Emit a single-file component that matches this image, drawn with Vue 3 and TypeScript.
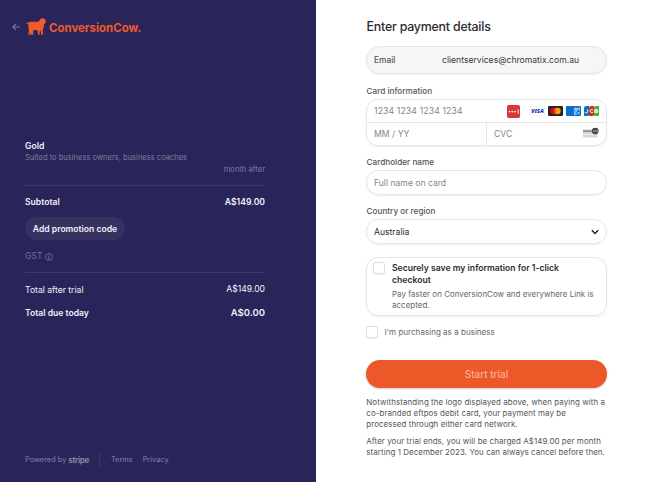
<script setup lang="ts">
interface FooterLink {
  label: string
}

const links: FooterLink[] = [{ label: 'Terms' }, { label: 'Privacy' }]
</script>

<template>
  <div class="checkout">
    <aside class="summary">
      <header class="brand">
        <svg class="back" viewBox="0 0 8 8" fill="none" stroke="#77749a" stroke-width="1.1">
          <path d="M8 4H1M4 .8.8 4 4 7.2" />
        </svg>
        <svg class="cow" viewBox="0 0 66 54" fill="#f15a29">
          <path d="M1 14 7 15 11 13 17 11H39L43 8 46 3 52 1 59 2 60 6 63 9 62 14 57 18V25L55 32 53 36 54 50H49L47 38 44 40V50H39L38 37 27 36 24 39 25 50H18V42L16 50H10L12 37 10 31V17L6 17Z" />
        </svg>
        <span class="brand-name">ConversionCow.</span>
      </header>

      <section class="order">
        <div class="product">Gold</div>
        <div class="description">Suited to business owners, business coaches</div>
        <div class="interval">month after</div>
        <div class="row subtotal"><span>Subtotal</span><span class="amount">A$149.00</span></div>
        <button class="promo" type="button">Add promotion code</button>
        <div class="gst">
          <span>GST</span>
          <svg viewBox="0 0 9 9" fill="none" stroke="currentColor" stroke-width=".9">
            <circle cx="4.5" cy="4.5" r="3.9" />
            <path d="M3.6 4h1v2.7M3.3 6.6h2.4M4.5 2.1v1" />
          </svg>
        </div>
        <div class="row after"><span>Total after trial</span><span class="amount">A$149.00</span></div>
        <div class="row due"><span>Total due today</span><span class="amount">A$0.00</span></div>
      </section>

      <footer class="legal">
        <span class="powered">Powered by</span>
        <span class="stripe">stripe</span>
        <nav><span v-for="link in links" :key="link.label">{{ link.label }}</span></nav>
      </footer>
    </aside>

    <main class="payment">
      <h1>Enter payment details</h1>
      <div class="email"><span class="email-label">Email</span><span class="email-value">clientservices@chromatix.com.au</span></div>

      <div class="label card-label">Card information</div>
      <div class="card">
        <div class="card-number">
          <span class="placeholder number">1234 1234 1234 1234</span>
          <svg class="autofill" viewBox="0 0 13 13">
            <rect width="13" height="13" rx="1.8" fill="#d63a36" />
            <g fill="#fff"><circle cx="2.5" cy="6.6" r=".85" /><circle cx="5.2" cy="6.6" r=".85" /><circle cx="7.9" cy="6.6" r=".85" /><path d="M10.7 4.5h.9v4.3h-.9z" /></g>
          </svg>
          <svg class="network" viewBox="0 0 15 10">
            <rect x=".3" y=".3" width="14.4" height="9.4" rx="1.2" fill="#fff" stroke="#e8e8ef" stroke-width=".6" />
            <text x="7.5" y="7.1" text-anchor="middle" textLength="12.4" lengthAdjust="spacingAndGlyphs" font-family="Open Sans, sans-serif" font-size="5.8" font-weight="800" font-style="italic" fill="#1a2faa">VISA</text>
          </svg>
          <svg class="network" viewBox="0 0 15 10">
            <rect width="15" height="10" rx="1.2" fill="#252525" />
            <circle cx="5.5" cy="5" r="3.2" fill="#eb001b" />
            <circle cx="9.5" cy="5" r="3.2" fill="#f79e1b" />
            <path d="M7.5 2.5a3.2 3.2 0 0 1 0 5 3.2 3.2 0 0 1 0-5" fill="#ff5f00" />
          </svg>
          <svg class="network" viewBox="0 0 15 10">
            <rect width="15" height="10" rx="1" fill="#0571cd" />
            <g fill="none" stroke="#fff" stroke-width=".65">
              <path d="m8 4.7 1.3-3 1.3 3M8.4 3.8h1.9M11 4.7v-3l1.2 1.7 1.2-1.7v3M10.7 5.6H8.6v2.8h2.1M8.6 7h1.8M11.1 5.6l2.7 2.8M13.8 5.6l-2.7 2.8" />
            </g>
          </svg>
          <svg class="network" viewBox="0 0 15 10">
            <path d="M2 0h3v8.5A1.5 1.5 0 0 1 3.5 10H0V2a2 2 0 0 1 2-2" fill="#047ab1" />
            <path d="M7 0h3v8.5A1.5 1.5 0 0 1 8.5 10H5V2a2 2 0 0 1 2-2" fill="#d42d27" />
            <path d="M12 0h3v8.5A1.5 1.5 0 0 1 13.5 10H10V2a2 2 0 0 1 2-2" fill="#42b52d" />
            <g fill="none" stroke="#fff" stroke-width=".9"><path d="M3.7 3.5v2.3c0 1.2-1.6 1.2-2.8.7M9.2 3.9c-1.3-.7-3.1-.6-3.1 1.1s1.8 1.8 3.1 1.1M10.8 3.6h2c1.3 0 1.3 1.4 0 1.4h-2 2.1c1.5 0 1.5 1.6 0 1.6h-2.1z" /></g>
          </svg>
        </div>
        <div class="card-details">
          <span class="placeholder expiry">MM / YY</span>
          <span class="cvc">
            <span class="placeholder">CVC</span>
            <svg viewBox="0 0 16 11">
              <path d="M0 2.2h14.3v7.3a1 1 0 0 1-1 1H1a1 1 0 0 1-1-1z" fill="#d8d8d8" />
              <path d="M0 3.4h10v1.6H0z" fill="#8c8c8c" />
              <path d="M1.5 7h8v1h-8z" fill="#ececec" />
              <circle cx="12.3" cy="4" r="3.3" fill="#3c3c3c" />
              <path d="M10.4 3v2M11.6 3h1v1h-1v1h1.1M13.4 3h1v2h-1M13.5 4h.9" fill="none" stroke="#ddd" stroke-width=".45" />
            </svg>
          </span>
        </div>
      </div>

      <div class="label name-label">Cardholder name</div>
      <div class="field name"><span class="placeholder">Full name on card</span></div>

      <div class="label country-label">Country or region</div>
      <div class="field country">
        <span>Australia</span>
        <svg viewBox="0 0 8 6" fill="none" stroke="#222" stroke-width="1.4"><path d="m.8 1.2 3.2 3.3 3.2-3.3" /></svg>
      </div>

      <div class="save">
        <span class="checkbox"></span>
        <div class="save-copy">
          <div class="save-title">Securely save my information for 1-click<br />checkout</div>
          <div class="save-text">Pay faster on ConversionCow and everywhere Link is<br />accepted.</div>
        </div>
      </div>

      <div class="business"><span class="checkbox"></span><span>I'm purchasing as a business</span></div>
      <button class="submit" type="button">Start trial</button>

      <p class="notice first">Notwithstanding the logo displayed above, when paying with a<br />co-branded eftpos debit card, your payment may be<br />processed through either card network.</p>
      <p class="notice second">After your trial ends, you will be charged A$149.00 per month<br />starting 1 December 2023. You can always cancel before then.</p>
    </main>
  </div>
</template>

<style>
body {
  margin: 0;
  background: #fff;
}
</style>

<style scoped>
.checkout {
  display: grid;
  grid-template-columns: 316px 338px;
  width: 654px;
  height: 482px;
  overflow: hidden;
  font-family: Inter, sans-serif;
  font-size: 8.6px;
  line-height: 12px;
  white-space: nowrap;
}
.checkout * { box-sizing: border-box; }
button { font-family: inherit; border: 0; white-space: nowrap; }
svg { display: block; flex: none; }

.summary {
  display: flex;
  flex-direction: column;
  padding: 17px 51px 15px 25px;
  background: #29255b;
  color: #f1f0f7;
}
.brand { display: flex; align-items: center; height: 20px; margin-left: -13px; }
.back { width: 8px; height: 8px; }
.cow { width: 22px; height: 18px; margin-left: 5px; }
.brand-name { margin-left: 2px; padding-top: 1px; color: #f15a29; font-size: 11.4px; font-weight: 700; letter-spacing: .03px; }
.order { display: flex; flex-direction: column; align-items: stretch; margin-top: 103px; }
.product { height: 12px; font-weight: 600; }
.description { height: 12px; line-height: 13px; margin-top: -1px; color: #817e9e; font-size: 7.5px; letter-spacing: .02px; }
.interval { height: 12px; margin-top: 1px; color: #817e9e; font-size: 7.6px; text-align: right; }
.row { display: flex; justify-content: space-between; height: 12px; }
.subtotal { height: 27px; margin-top: 9px; padding-top: 10px; border-top: 1px solid #3d396b; font-weight: 600; }
.promo { width: 100px; height: 23px; margin-top: 5px; padding: 0; border-radius: 12px; background: #353161; color: #f1f0f7; font-size: 8.6px; font-weight: 600; }
.gst { display: flex; align-items: center; gap: 3px; height: 12px; margin-top: 10px; color: #737095; }
.gst svg { width: 8px; height: 8px; margin-top: 1px; }
.after { height: 28px; margin-top: 10px; padding-top: 11px; border-top: 1px solid #3d396b; }
.after .amount { margin-top: -1px; }
.due { margin-top: 7px; font-weight: 600; }
.due .amount { font-size: 9.5px; }
.legal { display: flex; align-items: center; height: 14px; margin-top: auto; color: #8683a3; font-size: 7.3px; }
.powered { letter-spacing: .05px; }
.stripe { margin-left: 2px; font-size: 8px; font-weight: 700; letter-spacing: -.35px; }
.legal nav { display: flex; align-items: center; gap: 10px; height: 14px; margin-left: 10px; padding-left: 11px; border-left: 1px solid #3a3669; letter-spacing: .05px; }

.payment {
  display: flex;
  flex-direction: column;
  width: 241px;
  margin-left: 50px;
  padding-top: 18px;
  color: #2b2b2b;
}
h1 { height: 18px; margin: 0; padding-left: .5px; font-size: 12.4px; font-weight: 500; line-height: 18px; letter-spacing: -.21px; }
.email { display: flex; align-items: center; height: 28px; margin-top: 10px; padding-left: 7px; border: 1px solid #e6e6e6; border-radius: 14px; background: #f6f6f6; box-shadow: 0 1px 2px #0001; }
.email-label { width: 68px; color: #555; font-size: 8.4px; font-weight: 500; }
.email-value { color: #383838; }
.label { height: 12px; padding-left: .5px; color: #555; font-size: 8.2px; font-weight: 500; }
.card-label { margin-top: 11px; }
.card { height: 47px; margin-top: 2px; border: 1px solid #e6e6e6; border-radius: 12px; box-shadow: 0 1px 2px #0001; }
.card-number { display: flex; align-items: center; height: 23px; padding: 0 7px; border-bottom: 1px solid #e6e6e6; }
.placeholder { color: #858585; }
.number { width: 133px; letter-spacing: .16px; }
.autofill { width: 13px; height: 13px; margin-right: 10px; }
.network { width: 15px; height: 10px; }
.network + .network { margin-left: 3px; }
.card-details { display: flex; height: 22px; line-height: 22px; }
.expiry { width: 120px; padding-left: 7px; border-right: 1px solid #e6e6e6; letter-spacing: .05px; }
.cvc { display: flex; flex: 1; justify-content: space-between; padding: 0 7px; }
.cvc svg { width: 16px; height: 11px; margin-top: 4px; }
.name-label { margin-top: 10px; }
.field { display: flex; align-items: center; justify-content: space-between; height: 25px; margin-top: 2px; padding: 0 7px; border: 1px solid #e6e6e6; border-radius: 13px; box-shadow: 0 1px 2px #0001; }
.country-label { margin-top: 10px; }
.country svg { width: 8px; height: 6px; }
.save { display: flex; height: 59px; margin-top: 13px; padding: 4px 6px; border: 1px solid #e6e6e6; border-radius: 12px; box-shadow: 0 1px 2px #0001; }
.checkbox { flex: none; width: 12px; height: 12px; border: 1px solid #e0e0e0; border-radius: 2px; background: #fff; box-shadow: 0 1px 1px #0001; }
.save-copy { margin-left: 7px; }
.save-title { font-weight: 600; letter-spacing: .02px; }
.save-text { margin-top: 3px; color: #666; font-size: 7.9px; line-height: 10.7px; letter-spacing: .06px; }
.business { display: flex; align-items: center; gap: 6.5px; height: 12px; margin-top: 10px; color: #666; font-size: 8px; letter-spacing: .03px; }
.submit { height: 28px; flex: none; margin-top: 22px; padding: 0; border-radius: 14px; background: #ed5829; box-shadow: 0 1px 2px #0003; color: #f9b39b; font-size: 9.8px; font-weight: 500; letter-spacing: .05px; }
.notice { margin: 0; padding-left: .3px; color: #555; font-size: 7.95px; line-height: 10.8px; letter-spacing: .07px; }
.first { margin-top: 9px; }
.second { margin-top: 7px; }
</style>
